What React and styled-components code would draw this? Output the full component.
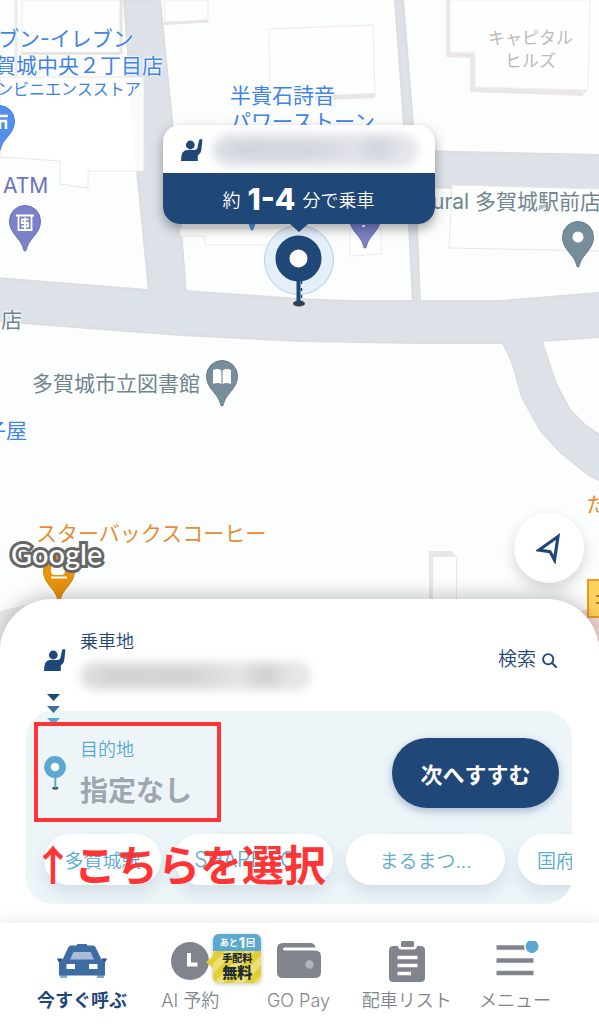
import React from "react";
import styled, { createGlobalStyle, css } from "styled-components";

const NAVY = "#1f4778";
const SKY = "#5aa9d0";
const GREY = "#80848c";
const FONT = `Inter, "Noto Sans CJK JP", sans-serif`;

const GlobalStyle = createGlobalStyle`
  *, *::before, *::after { box-sizing: border-box; }
  body { margin: 0; background: #fff; font-family: ${FONT}; }
  button { margin: 0; padding: 0; border: 0; background: none; font: inherit; color: inherit; cursor: pointer; }
`;

const Page = styled.div`
  display: flex;
  flex-direction: column;
  min-height: 100vh;
  overflow: hidden;
`;

/* ---------- Map ---------- */

const MapArea = styled.section`
  position: relative;
  flex: 1 0 600px;
  overflow: hidden;
  background: #fcfefe;
`;

const MapDrawing = styled.svg`
  position: absolute;
  inset: 0;
  width: 100%;
  height: 100%;
`;

const MapLabel = styled.span`
  position: absolute;
  left: ${(p) => p.$x}px;
  top: ${(p) => p.$y}px;
  color: ${(p) => p.$color};
  font-size: ${(p) => p.$size || 21}px;
  line-height: ${(p) => p.$line || 26}px;
  text-align: ${(p) => (p.$center ? "center" : "left")};
  white-space: pre;
  text-shadow: 0 0 2px #fff, 0 0 2px #fff, 0 0 3px #fff;
`;

const GoogleMark = styled.span`
  position: absolute;
  left: 11px;
  top: 538px;
  font-family: Lato, sans-serif;
  font-size: 29px;
  line-height: 32px;
  font-weight: 500;
  color: #fff;
  -webkit-text-stroke: 6px #666;
  paint-order: stroke fill;
`;

const PickupMarker = styled.div`
  position: absolute;
  inset: 0;
  display: flex;
  flex-direction: column;
  align-items: center;
  padding: 125px 2px 0 0;
  pointer-events: none;
`;

const PickupCard = styled.div`
  position: relative;
  z-index: 1;
  width: 272px;
  border-radius: 17px;
  background: #fff;
  box-shadow: 0 5px 12px rgba(0, 0, 0, 0.35);
`;

const PickupAddress = styled.div`
  display: flex;
  align-items: center;
  gap: 10px;
  height: 48px;
  padding: 2px 17px 0 18px;
`;

const Smudge = styled.div`
  flex: ${(p) => (p.$width ? "none" : "1")};
  width: ${(p) => (p.$width ? `${p.$width}px` : "auto")};
  height: ${(p) => p.$height}px;
  border-radius: 16px;
  background: radial-gradient(ellipse 50px 16px at 17% 50%, ${(p) => p.$dark}, transparent),
    radial-gradient(ellipse 70px 16px at 42% 50%, ${(p) => p.$dark}, transparent),
    radial-gradient(ellipse 28px 18px at 80% 48%, ${(p) => p.$dark}, transparent), ${(p) => p.$light};
  filter: blur(4px);
`;

const PickupWait = styled.div`
  position: relative;
  display: flex;
  align-items: center;
  justify-content: center;
  gap: 7px;
  height: 51px;
  border-radius: 0 0 17px 17px;
  background: ${NAVY};
  color: #fff;
  font-size: 18px;
  font-weight: 350;

  &::after {
    content: "";
    position: absolute;
    left: 50%;
    top: 100%;
    margin-left: -9px;
    border: 9px solid transparent;
    border-bottom: 0;
    border-top: 8px solid ${NAVY};
  }
`;

const Minutes = styled.strong`
  font-size: 30px;
  font-weight: 800;
  line-height: 36px;
`;

const LocateButton = styled.button`
  position: absolute;
  right: 15px;
  bottom: 58px;
  display: grid;
  place-items: center;
  width: 70px;
  height: 70px;
  border-radius: 50%;
  background: #fff;
  box-shadow: 0 6px 14px rgba(0, 0, 0, 0.16);
`;

/* ---------- Ride sheet ---------- */

const Sheet = styled.section`
  position: relative;
  margin-top: -42px;
  padding: 31px 27px 19px 26px;
  border-radius: 52px 52px 0 0;
  background: #fff;
  box-shadow: 0 -4px 18px rgba(0, 0, 0, 0.22);
`;

const PickupRow = styled.div`
  display: flex;
  align-items: center;
  gap: 14px;
  height: 60px;
  margin-bottom: 21px;
  padding: 0 15px 0 18px;
`;

const PlaceText = styled.span`
  display: flex;
  flex: 1;
  flex-direction: column;
  align-items: flex-start;
  gap: ${(p) => p.$gap}px;
`;

const PlaceLabel = styled.span`
  font-size: 18px;
  line-height: 23px;
  color: ${(p) => p.$color};
  font-weight: 350;
`;

const PlaceValue = styled.span`
  font-size: 28px;
  line-height: 34px;
  font-weight: 700;
  color: #a0a6ad;
`;

const SearchButton = styled.button`
  display: flex;
  align-items: center;
  gap: 6px;
  font-size: 19px;
  font-weight: 350;
  line-height: 26px;
  color: ${NAVY};
`;

const DestinationPanel = styled.div`
  position: relative;
  padding-top: 27px;
  border-radius: 27px;
  background: #edf5f9;
`;

const RouteArrows = styled.svg`
  position: absolute;
  left: 21px;
  top: -17px;
`;

const DestinationRow = styled.div`
  display: flex;
  align-items: center;
  justify-content: space-between;
  padding: 0 13px 0 18px;
`;

const DestinationButton = styled.button`
  display: flex;
  align-items: center;
  gap: 14px;
  text-align: left;
`;

const NextButton = styled.button`
  width: 167px;
  height: 70px;
  border-radius: 35px;
  background: ${NAVY};
  color: #fff;
  font-size: 22px;
  font-weight: 700;
  box-shadow: 0 3px 8px rgba(31, 71, 120, 0.35);
`;

const ChipRow = styled.div`
  display: flex;
  gap: 13px;
  padding: 26px 0 19px 18px;
  border-radius: 0 0 27px 27px;
  overflow-x: auto;
  scrollbar-width: none;
`;

const Chip = styled.button`
  flex: none;
  width: ${(p) => (p.$short ? 117 : 159)}px;
  height: 51px;
  padding: 0 19px;
  border-radius: 26px;
  background: #fff;
  color: ${SKY};
  font-size: ${(p) => (p.$latin ? 21 : 19)}px;
  font-weight: 350;
  text-align: ${(p) => (p.$start ? "left" : "center")};
  white-space: nowrap;
  box-shadow: 0 8px 16px rgba(60, 90, 110, 0.14);
`;

const Callout = styled.div`
  position: absolute;
  left: 8px;
  top: 11px;
  width: 187px;
  height: 100px;
  border: 4px solid #ff3535;
  pointer-events: none;
`;

const CalloutText = styled.strong`
  position: absolute;
  left: 6px;
  top: 128px;
  color: #ff3535;
  font-family: "Noto Sans CJK JP", sans-serif;
  font-size: 42px;
  line-height: 48px;
  white-space: nowrap;
  pointer-events: none;
`;

/* ---------- Bottom navigation ---------- */

const NavBar = styled.nav`
  position: relative;
  display: flex;
  padding: 18px 30px 11px 28px;
  background: #fff;
  box-shadow: 0 -4px 12px rgba(0, 0, 0, 0.07);
`;

const NavItem = styled.button`
  display: flex;
  flex: 1 1 0;
  flex-direction: column;
  align-items: center;
  gap: 8px;
  color: ${GREY};
  font-size: 18px;
  font-weight: 350;
  line-height: 24px;
  white-space: nowrap;
  ${(p) =>
    p.$active &&
    css`
      color: ${NAVY};
      font-weight: 700;
    `}
`;

const NavIcon = styled.span`
  position: relative;
  display: grid;
  place-items: center;
  height: 40px;
`;

const Badge = styled.span`
  position: absolute;
  left: 42px;
  top: -7px;
  width: 48px;
  height: 49px;
  border-radius: 6px;
  background: repeating-linear-gradient(135deg, #e3cf35 0 7px, #ecdf75 7px 14px);
  color: #222c33;
  font-weight: 700;
  text-align: center;
  box-shadow: 0 1px 4px rgba(0, 0, 0, 0.25);

  &::before {
    content: "";
    position: absolute;
    left: -7px;
    top: 22px;
    border: 6px solid transparent;
    border-left: 0;
    border-right: 7px solid #e3cf35;
  }
`;

const BadgeTop = styled.span`
  display: flex;
  align-items: center;
  justify-content: center;
  gap: 1px;
  height: 17px;
  border-radius: 6px 6px 0 0;
  background: ${SKY};
  color: #fff;
  font-size: 9px;
  line-height: 17px;

  b {
    font-size: 14px;
    font-weight: 800;
  }
`;

const BadgeLine = styled.span`
  display: block;
  font-size: ${(p) => (p.$big ? 15 : 10)}px;
  line-height: ${(p) => (p.$big ? 15 : 14)}px;
  font-weight: 900;
`;

/* ---------- Drawings ---------- */

const Hailer = () => (
  <svg width="22" height="22" viewBox="0 0 22 22" fill={NAVY} aria-hidden="true">
    <circle cx="9.300" cy="6" r="4.400" />
    <path d="M0 22Q0 11 6 11H13Q16 11 16.500 8.500L18 1.500Q18.300 0 20 0 21.600 0 21.400 1.600L20.200 11.500Q19.800 14.200 17.800 15.400L16.800 16.500V22z" />
  </svg>
);

const SearchIcon = () => (
  <svg width="15" height="15" viewBox="0 0 15 15" fill="none" stroke={NAVY} strokeWidth="1.900" strokeLinecap="round" aria-hidden="true">
    <circle cx="6.200" cy="6.200" r="5.100" />
    <path d="M10 10l4 4" />
  </svg>
);

const DestinationPin = () => (
  <svg width="22" height="34" viewBox="0 0 22 34" aria-hidden="true">
    <ellipse cx="11.300" cy="32" rx="3" ry="1.500" fill="#3c4a58" />
    <path d="M11.300 20v12" stroke={SKY} strokeWidth="2" />
    <circle cx="11" cy="11" r="7.600" fill="#fff" stroke={SKY} strokeWidth="6.600" />
  </svg>
);

const PickupPin = () => (
  <svg width="70" height="84" viewBox="0 0 70 84" aria-hidden="true">
    <circle cx="35" cy="36" r="34.500" fill="#e4effa" stroke="#a9d2ea" />
    <ellipse cx="35" cy="79.500" rx="6" ry="3" fill="#3a3f45" />
    <path d="M34.500 54v26" stroke={NAVY} strokeWidth="4" />
    <path d="M37.500 57v18" stroke={NAVY} strokeWidth="1.500" strokeDasharray="3 4" />
    <circle cx="34.500" cy="34.500" r="16" fill="#fff" stroke={NAVY} strokeWidth="14" />
  </svg>
);

const MapPin = ({ x, y, fill, edge, children }) => (
  <g transform={`translate(${x} ${y})`}>
    <path d="M0 30C-1.500 30-1.500 28-2 26-5 17-15.500 12-15.500 0a15.500 15.500 0 0 1 31 0C15.500 12 5 17 2 26 1.500 28 1.500 30 0 30z" fill={fill} stroke={edge} />
    {children}
  </g>
);

const CarIcon = () => (
  <svg width="50" height="34" viewBox="0 0 50 34" aria-hidden="true">
    <path d="M0 14.500h5v4H2zM50 14.500h-5v4h3z" fill="#244f83" />
    <path d="M3 29h7v5H3zM40 29h7v5h-7z" fill="#8ba6c6" />
    <path d="M11.500 3Q12 1.500 14 1.500h5.500L20.500 0h9l1 1.500H36q2 0 2.500 1.500l5.500 11.500 4 4v13H2v-13l4-4z" fill="#3f6ca3" />
    <path d="M16.500 8h17l3.500 7.500H13z" fill="#a7bcd5" />
    <path d="M9.500 20h8.500v5H9.500zM32 20h8.500v5H32z" fill="#fff" />
  </svg>
);

const ClockIcon = () => (
  <svg width="38" height="38" viewBox="0 0 38 38" aria-hidden="true">
    <circle cx="19" cy="19" r="19" fill={GREY} />
    <path d="M18 11v11.500h8.500" fill="none" stroke="#fff" strokeWidth="4" />
  </svg>
);

const WalletIcon = () => (
  <svg width="44" height="36" viewBox="0 0 44 36" aria-hidden="true">
    <path d="M6 0h27q5 0 5.500 4.500H7.500a1.300 1.300 0 0 0 0 3H38q6 0 6 6V29q0 6-6 6H6q-6 0-6-6V6q0-6 6-6z" fill={GREY} />
    <circle cx="32.500" cy="21.500" r="4.200" fill="#b2b5bb" />
  </svg>
);

const ClipboardIcon = () => (
  <svg width="36" height="42" viewBox="0 0 36 42" aria-hidden="true">
    <rect x="12" y="0" width="13" height="6" rx="1.500" fill={GREY} />
    <path d="M4.500 5H9q.5 3.500 3 3.500h13q2.500 0 3-3.500h3.500Q36 5 36 9.500v27q0 4.500-4.500 4.500h-27Q0 41 0 36.500v-27Q0 5 4.500 5z" fill={GREY} />
    <path d="M8.500 16.500h20M8.500 24.500h20M8.500 32.500h13.500" stroke="#fff" strokeWidth="3.500" />
  </svg>
);

const MenuIcon = () => (
  <svg width="50" height="40" viewBox="0 0 50 40" aria-hidden="true">
    <path d="M6.500 6.500h37M6.500 19.500h37M6.500 32h37" stroke={GREY} strokeWidth="4.500" />
    <circle cx="42" cy="5.500" r="8" fill="#fff" />
    <circle cx="42" cy="5.500" r="6.500" fill={SKY} />
  </svg>
);

const ROAD = { fill: "#dce2e8", stroke: "#dddde1", strokeWidth: 2 };
const BUILDING = { fill: "#fefefe", stroke: "#eceaea", strokeWidth: 1 };

const CityMap = () => (
  <MapDrawing aria-hidden="true">
    <path d="M124 0L137 170 149 292H186L172 120 160 0z" {...ROAD} />
    <path d="M395 0L404 125 413 303H420L413 125 403 0z" {...ROAD} />
    <path d="M410 151L599 155H2400V190H599L410 187z" {...ROAD} />
    <path d="M502 341L512 362 522 397 540 430 560 452 590 476 620 490 2400 900 2400 860 610 442 585 425 570 410 556 384 541 339z" {...ROAD} />
    <path d="M-4 278L148 290 185 291 299 299 350 301H500L599 293 2400 160V215L599 337 541 341 502 343H420L300 341 180 335-4 321z" {...ROAD} />
    <path d="M149 280L184 280 185 296H150zM505 335H540L541 348H508z" fill={ROAD.fill} />
    <path d="M414 290h5.500v16h-5.500z" fill={ROAD.fill} />

    <path d="M16 0V78" stroke="#eceaea" strokeWidth="3" />
    <path d="M22 0H121V54H22z" {...BUILDING} />
    <path d="M22 53.500H121V0" fill="none" stroke="#e6e4e4" strokeWidth="3" />
    <path d="M0 77H144V171H88V188L60 184V161L0 157z" fill="#fff" fillOpacity=".85" stroke="#e8e6e6" />
    <path d="M164 0H208V21L165 23z" {...BUILDING} />
    <path d="M164 23.500L208 21" stroke="#e6e4e4" strokeWidth="3" />
    <path d="M269 29L373 25 375 96 270 100z" {...BUILDING} />
    <path d="M315 98L375 95.500" stroke="#e8e6e5" strokeWidth="5" />
    <path d="M446 0H450V53H475V87L588 90 582 96 470 92V58L446 57z" fill="#eae7e6" />
    <path d="M450 0H590L588 90 475 87V52H450z" {...BUILDING} stroke="#f0eeed" />
    <path d="M452 185L599 189H700V254L599 251 449 248z" {...BUILDING} stroke="#e8e6e6" />
    <path d="M350 228H381V254L350 256z" {...BUILDING} />
    <path d="M180 236H205V245H300V228H180z" {...BUILDING} />
    <path d="M429 551H452L457 558V610H429z" fill="#e9e6e5" />
    <path d="M433 557H456V610H433z" fill="#fdfdfd" />
    <path d="M0 611L24 605 40 640H0z" fill="#ecebea" />
    <path d="M570 616L599 604V641H560z" fill="#f3d8d8" />
    <path d="M588 580H640V617H588z" fill="#ffd25e" stroke="#ee9a20" strokeWidth="2" />
    <path d="M596 596h8M596 603h8" stroke="#8a6820" strokeWidth="1.500" />

    <MapPin x={-1} y={121} fill="#5390ee" edge="#3f7fdf">
      <path d="M-10-5H9M-8 0H8M-6 0V8M1 0V8M7 0V8" stroke="#fff" strokeWidth="2.500" />
    </MapPin>
    <MapPin x={25} y={221} fill="#7b83c8" edge="#656db8">
      <path d="M-9-5.500H9M-6.500-5V9H6.500V-5M3.500-1.500H-3V2H3V5.500H-3.500M0-3.500V8" fill="none" stroke="#fff" strokeWidth="1.800" />
    </MapPin>
    <MapPin x={578} y={237} fill="#758e99" edge="#657d88">
      <circle r="5.500" fill="#fff" />
    </MapPin>
    <MapPin x={222} y={376} fill="#758e99" edge="#657d88">
      <path d="M-9-6Q-4-8-.6-5.500V8Q-4 6-9 8zM9-6Q4-8 .6-5.500V8Q4 6 9 8z" fill="#fff" />
    </MapPin>
    <MapPin x={365} y={218} fill="#7b83c8" edge="#656db8">
      <path d="M-3 8h3" stroke="#fff" strokeWidth="2" />
    </MapPin>
    <MapPin x={252} y={200} fill="#5390ee" edge="#3f7fdf" />
    <MapPin x={59} y={571} fill="#e8930c" edge="#da8508">
      <path d="M-8-6H6V0Q6 4 2 4H-4Q-8 4-8 0z" fill="#fff" />
      <path d="M-8 6.500H8" stroke="#fff" strokeWidth="2" />
    </MapPin>
  </MapDrawing>
);

const BLUE = "#3f83ea";
const SLATE = "#71858f";
const ORANGE = "#e58d35";

const LABELS = [
  { text: "ブン-イレブン", x: -2, y: 26, color: BLUE },
  { text: "賀城中央２丁目店", x: -5, y: 53, color: BLUE },
  { text: "ンビニエンスストア", x: -3, y: 76, color: BLUE, size: 16 },
  { text: "半貴石詩音\nパワーストーン", x: 230, y: 83, color: BLUE },
  { text: "キャピタル\nヒルズ", x: 488, y: 27, color: "#bdb9b7", size: 17, line: 23, center: true },
  { text: "ATM", x: 3, y: 173, color: "#6d72c0" },
  { text: "ural 多賀城駅前店", x: 432, y: 189, color: SLATE },
  { text: "ド店", x: -20, y: 307, color: SLATE },
  { text: "多賀城市立図書館", x: 32, y: 371, color: SLATE },
  { text: "子屋", x: -15, y: 418, color: BLUE },
  { text: "スターバックスコーヒー", x: 36, y: 521, color: ORANGE },
  { text: "た", x: 586, y: 492, color: ORANGE },
];

const CHIPS = [
  { text: "多賀城駅", short: true },
  { text: "SHARE LO...", latin: true },
  { text: "まるまつ..." },
  { text: "国府多賀城", start: true },
];

export default function App() {
  return (
    <Page>
      <GlobalStyle />
      <MapArea>
        <CityMap />
        {LABELS.map((l) => (
          <MapLabel key={l.text} $x={l.x} $y={l.y} $color={l.color} $size={l.size} $line={l.line} $center={l.center}>
            {l.text}
          </MapLabel>
        ))}
        <GoogleMark>Google</GoogleMark>
        <PickupMarker>
          <PickupCard>
            <PickupAddress>
              <Hailer />
              <Smudge $height={34} $light="#e5e7ec" $dark="#ccd1d9" />
            </PickupAddress>
            <PickupWait>
              約<Minutes>1-4</Minutes>分で乗車
            </PickupWait>
          </PickupCard>
          <PickupPin />
        </PickupMarker>
        <LocateButton aria-label="現在地">
          <svg width="26" height="32" viewBox="0 0 26 32" fill="none" stroke={NAVY} strokeWidth="3.200" aria-hidden="true">
            <path d="M22 4.500L3 18 14 19.600 18.500 28z" />
          </svg>
        </LocateButton>
      </MapArea>

      <Sheet>
        <PickupRow>
          <Hailer />
          <PlaceText $gap={8}>
            <PlaceLabel $color={NAVY}>乗車地</PlaceLabel>
            <Smudge $width={231} $height={30} $light="#e6e7e7" $dark="#cbcccd" />
          </PlaceText>
          <SearchButton>
            検索
            <SearchIcon />
          </SearchButton>
        </PickupRow>

        <DestinationPanel>
          <RouteArrows width="13" height="32" viewBox="0 0 13 32" aria-hidden="true">
            <path d="M0 0h13L6.500 7z" fill={NAVY} />
            <path d="M0 12h13l-6.500 7z" fill="#3f6ca3" />
            <path d="M0 24h13l-6.500 7z" fill={SKY} />
          </RouteArrows>
          <DestinationRow>
            <DestinationButton>
              <DestinationPin />
              <PlaceText $gap={13}>
                <PlaceLabel $color={SKY}>目的地</PlaceLabel>
                <PlaceValue>指定なし</PlaceValue>
              </PlaceText>
            </DestinationButton>
            <NextButton>次へすすむ</NextButton>
          </DestinationRow>
          <ChipRow>
            {CHIPS.map((c) => (
              <Chip key={c.text} $short={c.short} $start={c.start} $latin={c.latin}>
                {c.text}
              </Chip>
            ))}
          </ChipRow>
          <Callout />
          <CalloutText>↑こちらを選択</CalloutText>
        </DestinationPanel>
      </Sheet>

      <NavBar>
        <NavItem $active aria-current="page">
          <NavIcon>
            <CarIcon />
          </NavIcon>
          今すぐ呼ぶ
        </NavItem>
        <NavItem>
          <NavIcon>
            <ClockIcon />
            <Badge>
              <BadgeTop>
                あと<b>1</b>回
              </BadgeTop>
              <BadgeLine>手配料</BadgeLine>
              <BadgeLine $big>無料</BadgeLine>
            </Badge>
          </NavIcon>
          AI 予約
        </NavItem>
        <NavItem>
          <NavIcon>
            <WalletIcon />
          </NavIcon>
          GO Pay
        </NavItem>
        <NavItem>
          <NavIcon>
            <ClipboardIcon />
          </NavIcon>
          配車リスト
        </NavItem>
        <NavItem>
          <NavIcon>
            <MenuIcon />
          </NavIcon>
          メニュー
        </NavItem>
      </NavBar>
    </Page>
  );
}
